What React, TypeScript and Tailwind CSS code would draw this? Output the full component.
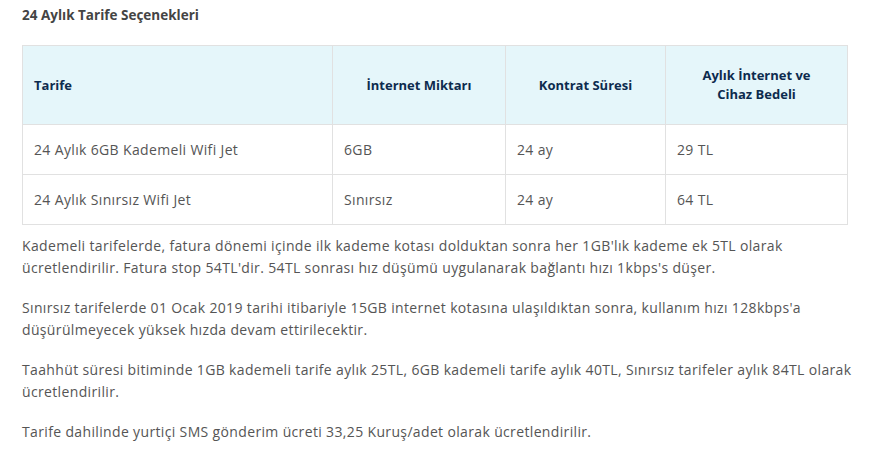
const rows = [
  { name: '24 Aylık 6GB Kademeli Wifi Jet', amount: '6GB', term: '24 ay', price: '29 TL' },
  { name: '24 Aylık Sınırsız Wifi Jet', amount: 'Sınırsız', term: '24 ay', price: '64 TL' },
]

const notes = [
  "Kademeli tarifelerde, fatura dönemi içinde ilk kademe kotası dolduktan sonra her 1GB'lık kademe ek 5TL olarak ücretlendirilir. Fatura stop 54TL'dir. 54TL sonrası hız düşümü uygulanarak bağlantı hızı 1kbps's düşer.",
  "Sınırsız tarifelerde 01 Ocak 2019 tarihi itibariyle 15GB internet kotasına ulaşıldıktan sonra, kullanım hızı 128kbps'a düşürülmeyecek yüksek hızda devam ettirilecektir.",
  'Taahhüt süresi bitiminde 1GB kademeli tarife aylık 25TL, 6GB kademeli tarife aylık 40TL, Sınırsız tarifeler aylık 84TL olarak ücretlendirilir.',
  'Tarife dahilinde yurtiçi SMS gönderim ücreti 33,25 Kuruş/adet olarak ücretlendirilir.',
]

export default function App() {
  return (
    <div className="w-[877px] h-[455px] bg-white px-[22px] pt-[6px] text-[14px] tracking-[0.35px] text-[#555] font-['Open_Sans','Noto_Sans',sans-serif]">
      <h2 className="text-[13.5px] font-bold text-[#444] leading-[18px] tracking-normal">24 Aylık Tarife Seçenekleri</h2>

      <table className="mt-[21px] w-[825px] border-collapse table-fixed">
        <colgroup>
          <col className="w-[310px]" />
          <col className="w-[173px]" />
          <col className="w-[160px]" />
          <col className="w-[182px]" />
        </colgroup>
        <thead>
          <tr className="h-[79px] bg-[#e5f6fa] text-[#0d2b4e] font-bold text-[13px] leading-[19px] tracking-normal">
            <th className="border border-[#e1e1e1] px-[11px] text-left">Tarife</th>
            <th className="border border-[#e1e1e1] px-[11px] text-center">İnternet Miktarı</th>
            <th className="border border-[#e1e1e1] px-[11px] text-center">Kontrat Süresi</th>
            <th className="border border-[#e1e1e1] px-[26px] text-center">Aylık İnternet ve Cihaz Bedeli</th>
          </tr>
        </thead>
        <tbody>
          {rows.map((r) => (
            <tr key={r.name} className="h-[50px]">
              <td className="border border-[#e1e1e1] px-[11px]">{r.name}</td>
              <td className="border border-[#e1e1e1] px-[11px]">{r.amount}</td>
              <td className="border border-[#e1e1e1] px-[11px]">{r.term}</td>
              <td className="border border-[#e1e1e1] px-[11px]">{r.price}</td>
            </tr>
          ))}
        </tbody>
      </table>

      <div className="mt-[10px] w-[840px] flex flex-col gap-[18px] leading-[22px]">
        {notes.map((n) => (
          <p key={n}>{n}</p>
        ))}
      </div>
    </div>
  )
}
